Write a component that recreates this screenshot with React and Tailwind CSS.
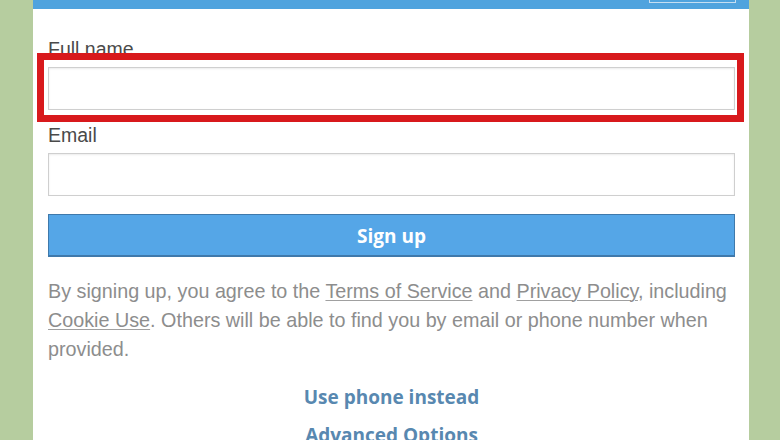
import React from 'react';

const Field = ({ label, highlight }) => (
  <div className="flex flex-col">
    <label className="text-[19.5px] leading-[22px] text-[#4a4a4a]">{label}</label>
    <div className="relative mt-[7px]">
      <input
        type="text"
        className="block w-full h-[43px] bg-white border border-[#cfcfcf] shadow-[inset_0_1px_2px_rgba(0,0,0,0.08)] outline-none"
      />
      {/* red highlight frame */}
      {highlight && (
        <div className="absolute -left-[11px] -right-[9px] -top-[14px] -bottom-[12px] border-[7px] border-[#d8191c] pointer-events-none" />
      )}
    </div>
  </div>
);

export default function App() {
  return (
    <div className="w-[780px] h-[440px] overflow-hidden flex bg-[#b6cd9f] font-['Liberation_Sans',Arial,sans-serif]">
      <div className="w-[33px] shrink-0" />

      <div className="w-[716px] shrink-0 bg-white flex flex-col">
        {/* top bar */}
        <div className="h-[9px] shrink-0 bg-[#4fa3de] flex justify-end items-start pr-[13px]">
          <div className="w-[87px] h-[3px] border-x border-b border-[#c5def2]" />
        </div>

        <div className="shrink-0 px-[15px] pr-[14px] pt-[29px] flex flex-col">
          <Field label="Full name" highlight />
          <div className="mt-[14px]">
            <Field label="Email" />
          </div>

          <button className="mt-[18px] h-[43px] w-full pt-[3px] bg-[#55a6e7] border border-[#3f79ab] border-b-2 text-white text-[19px] font-bold font-['Open_Sans',sans-serif]">
            Sign up
          </button>

          <p className="mt-[20px] text-[19.75px] leading-[29px] text-[#8d8d8d] whitespace-nowrap">
            By signing up, you agree to the{' '}
            <span className="underline decoration-[#a0a0a0] decoration-1 underline-offset-2">Terms of Service</span> and{' '}
            <span className="underline decoration-[#a0a0a0] decoration-1 underline-offset-2">Privacy Policy</span>, including
            <br />
            <span className="underline decoration-[#a0a0a0] decoration-1 underline-offset-2">Cookie Use</span>. Others will be able to find you by email or phone number when
            <br />
            provided.
          </p>

          <div className="mt-[19px] flex flex-col items-center font-['Open_Sans',sans-serif] font-bold text-[19px] leading-[29px] text-[#5888b0] gap-[9px]">
            <span>Use phone instead</span>
            <span>Advanced Options</span>
          </div>
        </div>
      </div>

      <div className="flex-1" />
    </div>
  );
}
